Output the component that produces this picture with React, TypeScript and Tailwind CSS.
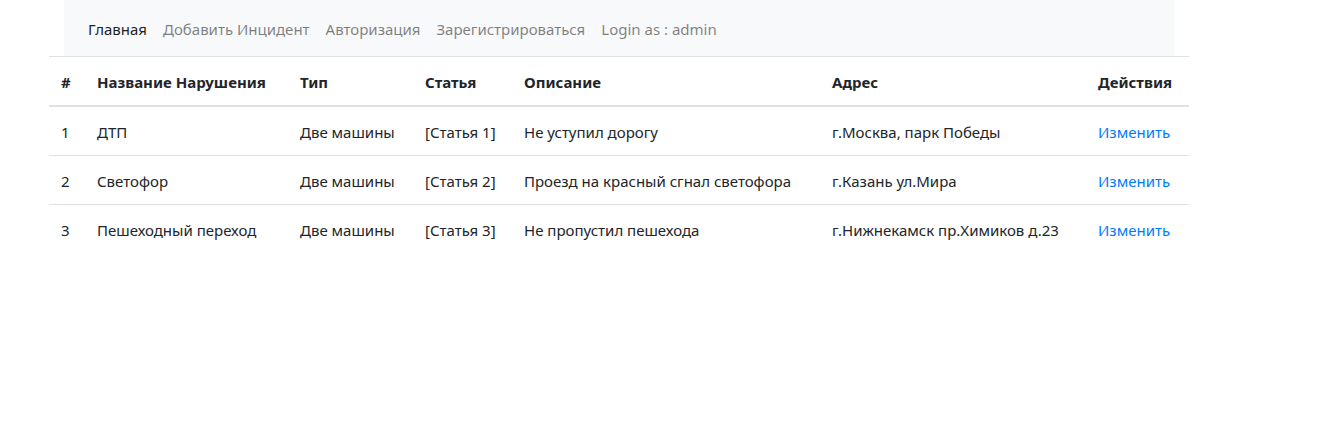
import React from "react";

const rows = [
  ["1", "ДТП", "Две машины", "[Статья 1]", "Не уступил дорогу", "г.Москва, парк Победы"],
  ["2", "Светофор", "Две машины", "[Статья 2]", "Проезд на красный сгнал светофора", "г.Казань ул.Мира"],
  ["3", "Пешеходный переход", "Две машины", "[Статья 3]", "Не пропустил пешехода", "г.Нижнекамск пр.Химиков д.23"],
];

const widths = ["w-[36px]", "w-[203px]", "w-[125px]", "w-[99px]", "w-[308px]", "w-[266px]", "w-[103px]"];

export default function App() {
  return (
    <div className="min-h-[439px] bg-white text-[15px] leading-[24px] text-[#212529] [font-family:'Segoe_UI','Noto_Sans',sans-serif]">
      <nav className="ml-[64px] w-[1110px] h-[56px] bg-[#f8f9fa] flex items-center px-[16px] pt-[2px]">
        <a className="px-[8px] py-[8px] text-[rgba(0,0,0,0.9)]">Главная</a>
        <a className="px-[8px] py-[8px] text-[rgba(0,0,0,0.5)]">Добавить Инцидент</a>
        <a className="px-[8px] py-[8px] text-[rgba(0,0,0,0.5)]">Авторизация</a>
        <a className="px-[8px] py-[8px] text-[rgba(0,0,0,0.5)]">Зарегистрироваться</a>
        <a className="px-[8px] py-[8px] text-[rgba(0,0,0,0.5)]">Login as : admin</a>
      </nav>
      <table className="ml-[49px] w-[1140px] border-collapse table-fixed">
        <thead>
          <tr>
            {["#", "Название Нарушения", "Тип", "Статья", "Описание", "Адрес", "Действия"].map((h, i) => (
              <th
                key={i}
                className={`${widths[i]} text-left font-bold pt-[13px] pb-[11px] px-[12px] border-t border-t-[#dee2e6] border-b-2 border-b-[#dee2e6] whitespace-nowrap`}
              >
                {h}
              </th>
            ))}
          </tr>
        </thead>
        <tbody>
          {rows.map((r, ri) => (
            <tr key={ri}>
              {r.map((c, ci) => (
                <td key={ci} className="pt-[13px] pb-[11px] px-[12px] border-t border-t-[#dee2e6] whitespace-nowrap">
                  {c}
                </td>
              ))}
              <td className="pt-[13px] pb-[11px] px-[12px] border-t border-t-[#dee2e6] whitespace-nowrap">
                <a className="text-[#007bff]">Изменить</a>
              </td>
            </tr>
          ))}
        </tbody>
      </table>
    </div>
  );
}
